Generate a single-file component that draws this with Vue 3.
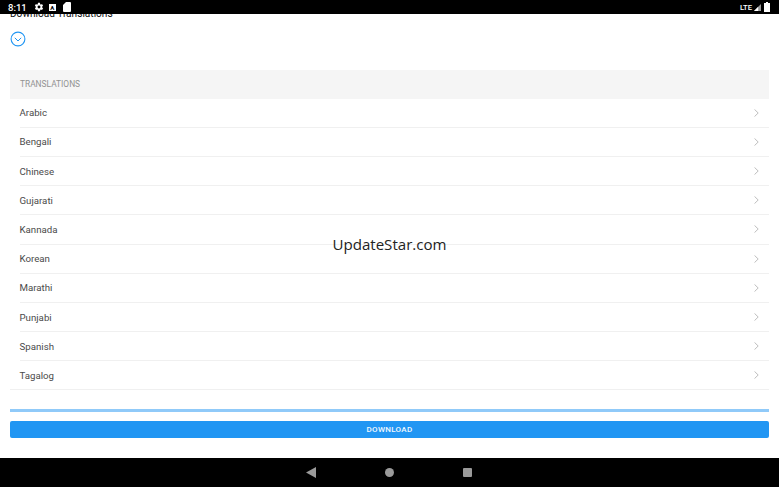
<template>
  <div class="screen">
    <header class="status">
      <span class="time">8:11</span>
      <svg class="gear" width="10" height="10" viewBox="0 0 24 24"><path fill="#fff" d="M19.400 13c.1-.3.1-.7.1-1s0-.7-.1-1l2.100-1.600c.2-.2.2-.4.1-.6l-2-3.500c-.1-.2-.4-.3-.6-.2l-2.500 1c-.5-.4-1.100-.7-1.700-1L14.400 2.400c0-.2-.2-.4-.5-.4h-4c-.2 0-.4.2-.5.400L9 5.100c-.6.3-1.200.6-1.700 1l-2.500-1c-.2-.1-.5 0-.6.200l-2 3.500c-.1.200 0 .5.100.6L4.500 11c0 .3-.1.700-.1 1s0 .7.100 1l-2.100 1.600c-.2.200-.2.400-.1.600l2 3.500c.1.200.4.300.6.200l2.500-1c.5.400 1.100.7 1.700 1l.4 2.700c0 .2.200.4.500.4h4c.2 0 .4-.2.500-.4l.4-2.700c.6-.3 1.200-.6 1.700-1l2.500 1c.2.100.5 0 .6-.2l2-3.500c.1-.2.1-.5-.1-.6L19.400 13zM12 15.500a3.500 3.500 0 1 1 0-7 3.500 3.500 0 0 1 0 7z"/></svg>
      <span class="a-box">A</span>
      <svg width="8" height="10" viewBox="0 0 16 20"><path fill="#fff" d="M6 0h8a2 2 0 0 1 2 2v16a2 2 0 0 1-2 2H2a2 2 0 0 1-2-2V6z"/></svg>
      <span class="spacer"></span>
      <span class="lte">LTE</span>
      <svg width="7" height="7" viewBox="0 0 10 10"><path fill="#9a9a9a" d="M10 0v10H0z"/><path fill="#fff" d="M6 4v6H0z"/></svg>
      <svg class="batt" width="6" height="10" viewBox="0 0 6 10"><path fill="#fff" d="M2 0h2v1h2v9H0V1h2z"/></svg>
    </header>

    <main class="content">
      <h1 class="title">Download Translations</h1>
      <svg class="toggle" width="16" height="16" viewBox="0 0 16 16" fill="none" stroke="#2196f3">
        <circle cx="8" cy="8" r="6.900" stroke-width="1.100"/>
        <path d="M4.800 6.800 8 10l3.200-3.200" stroke-width="1"/>
      </svg>

      <section class="panel">
        <div class="panel-head">TRANSLATIONS</div>
        <div v-for="(lang, i) in languages" :key="lang" class="row" :class="{ last: i === languages.length - 1 }">
          <span>{{ lang }}</span>
          <svg width="5" height="8" viewBox="0 0 5 8" fill="none" stroke="#b5b5b5" stroke-width="0.900"><path d="m.5.4 3.700 3.600L.5 7.600"/></svg>
        </div>
      </section>

      <div class="progress"></div>
      <button class="download">DOWNLOAD</button>
    </main>

    <nav class="nav">
      <svg width="10" height="11" viewBox="0 0 10 11"><path fill="#9a9a9a" d="M10 0v11L0 5.500z"/></svg>
      <span class="home"></span>
      <span class="recent"></span>
    </nav>

    <div class="watermark">UpdateStar.com</div>
  </div>
</template>

<script setup>
const languages = ['Arabic', 'Bengali', 'Chinese', 'Gujarati', 'Kannada', 'Korean', 'Marathi', 'Punjabi', 'Spanish', 'Tagalog']
</script>

<style scoped>
.screen {
  position: relative;
  width: 779px;
  height: 487px;
  display: flex;
  flex-direction: column;
  overflow: hidden;
  background: #fff;
  font-family: Roboto, sans-serif;
}
.status {
  position: relative;
  z-index: 1;
  height: 14px;
  flex: none;
  display: flex;
  align-items: center;
  padding: 0 9px 0 8px;
  background: #000;
  color: #fff;
}
.time {
  font-size: 9.500px;
  font-weight: 500;
  margin-right: 7px;
}
.a-box {
  width: 7px;
  height: 7px;
  margin: 0 7px 0 5px;
  background: #fff;
  color: #000;
  font-size: 6px;
  font-weight: 700;
  line-height: 7px;
  text-align: center;
}
.spacer {
  flex: 1;
}
.lte {
  font-size: 7.600px;
  font-weight: 500;
  margin-right: 2px;
}
.batt {
  margin-left: 3px;
}
.content {
  flex: 1;
  min-height: 0;
  padding: 0 10px;
}
.title {
  margin: -7px 0 0;
  font-size: 10.100px;
  line-height: 14px;
  font-weight: 400;
  color: #111;
}
.toggle {
  display: block;
  margin: 10px 0 0 0;
  width: 16px;
  height: 16px;
}
.panel {
  margin-top: 23px;
}
.panel-head {
  height: 28.600px;
  display: flex;
  align-items: center;
  padding-left: 10px;
  background: #f5f5f5;
  color: #929292;
  font-size: 8.400px;
}
.row {
  position: relative;
  height: 29.200px;
  display: flex;
  align-items: center;
  justify-content: space-between;
  padding: 0 10px 1px 9.500px;
  box-sizing: border-box;
  color: #4a4a4a;
  font-size: 9.700px;
}
.row::after {
  content: '';
  position: absolute;
  left: 10px;
  right: 0;
  bottom: 0;
  height: 1px;
  background: #f0f0f0;
}
.row.last::after {
  left: 0;
}
.progress {
  height: 3px;
  margin-top: 18.400px;
  background: #90caf9;
}
.download {
  display: block;
  width: 100%;
  height: 17px;
  margin-top: 9px;
  padding: 0;
  border: 0;
  border-radius: 2px;
  background: #2196f3;
  color: #f2f9ff;
  font-family: inherit;
  font-size: 8px;
  font-weight: 500;
  letter-spacing: 0.300px;
}
.nav {
  height: 29px;
  flex: none;
  display: flex;
  align-items: center;
  justify-content: center;
  gap: 69px;
  padding-right: 1px;
  background: #000;
}
.home {
  width: 9px;
  height: 9px;
  border-radius: 50%;
  background: #9a9a9a;
}
.recent {
  width: 9px;
  height: 9px;
  border-radius: 1px;
  background: #9a9a9a;
}
.watermark {
  position: absolute;
  left: 0;
  right: 0;
  top: 233px;
  text-align: center;
  font-family: "Open Sans", sans-serif;
  font-size: 15.100px;
  line-height: 22px;
  color: #222;
}
</style>
